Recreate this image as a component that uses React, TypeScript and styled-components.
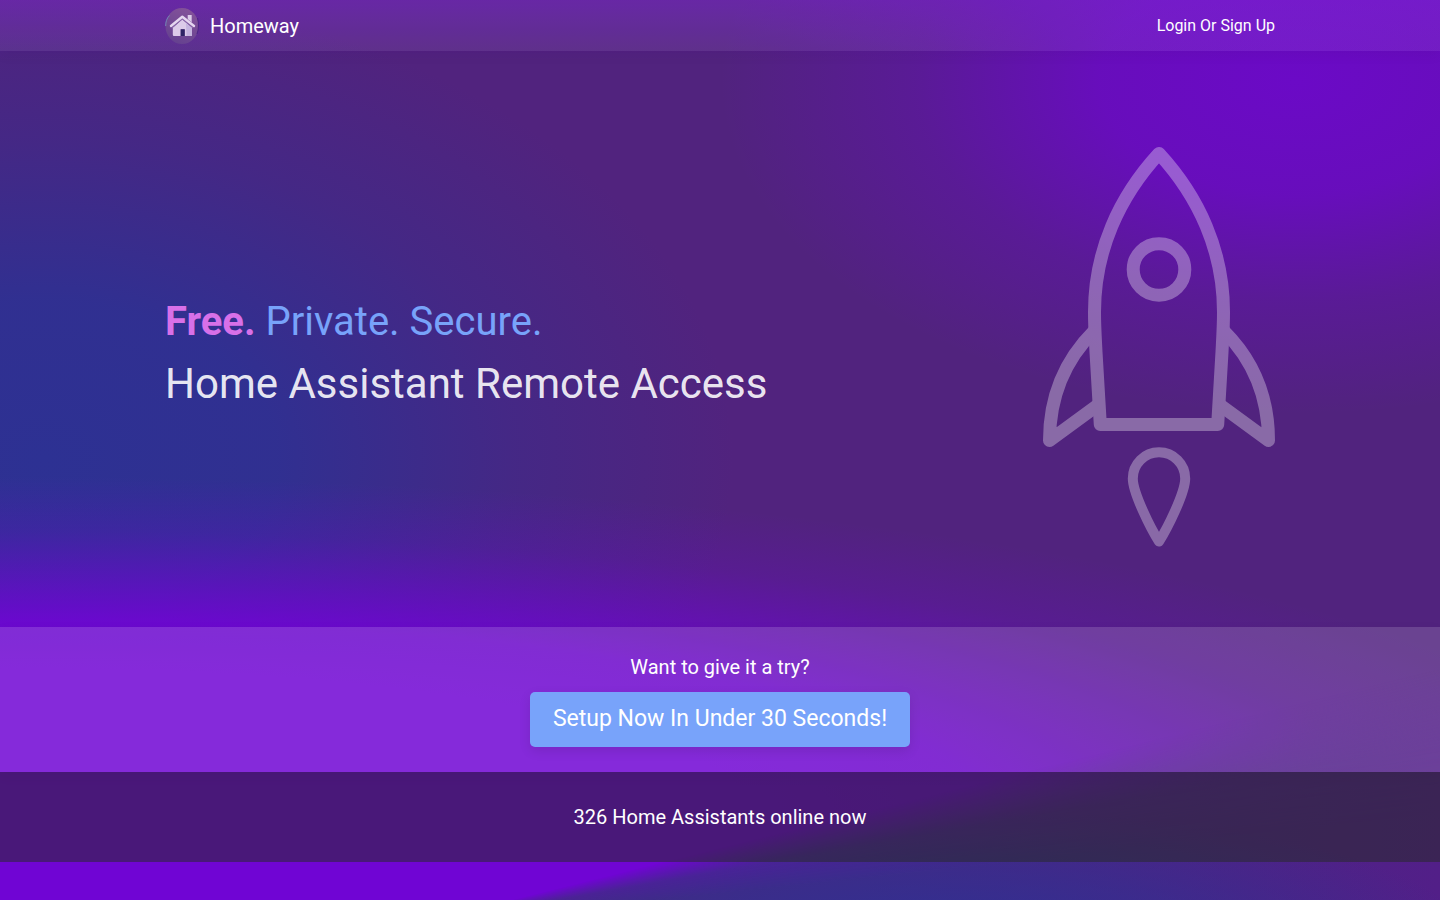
import React from "react";
import styled, { createGlobalStyle } from "styled-components";

const GlobalStyle = createGlobalStyle`
  *, *::before, *::after { box-sizing: border-box; }
  html { background: #51247d; }
  body {
    margin: 0;
    font-family: Roboto, "Liberation Sans", sans-serif;
    color: #fff;
  }
  h1, p { margin: 0; font-weight: 400; }
`;

const Page = styled.div`
  position: relative;
  isolation: isolate;
  min-height: 100vh;
  background:
    linear-gradient(to bottom, rgba(112, 5, 212, 0.38) 0, rgba(112, 5, 212, 0) 60px),
    radial-gradient(ellipse 40% 37% at 90% 9%, rgba(112, 5, 212, 0.84) 0%, rgba(112, 5, 212, 0.72) 34%, rgba(112, 5, 212, 0.28) 66%, rgba(112, 5, 212, 0) 100%),
    radial-gradient(ellipse 112% 38% at 3% 91%, #7005d4 0%, #7005d4 44%, rgba(112, 5, 212, 0.9) 58%, rgba(112, 5, 212, 0.22) 84%, rgba(112, 5, 212, 0) 100%),
    radial-gradient(ellipse 48% 52% at 3% 51%, #2d3193 0%, rgba(45, 49, 147, 0.9) 34%, rgba(45, 49, 147, 0.35) 68%, rgba(45, 49, 147, 0) 100%),
    #51237e;
`;

/* Blue sweep that rises to the right along the lower edge of the page. */
const Wave = styled.div`
  position: absolute;
  inset: 0;
  z-index: -1;
  background:
    radial-gradient(ellipse 36% 14% at 66% 104%, rgba(45, 49, 147, 0.9) 0%, rgba(45, 49, 147, 0.5) 50%, rgba(45, 49, 147, 0) 100%),
    linear-gradient(to right, #472882 60%, #521f88 100%);
  mask-image: conic-gradient(from 0deg at 28% 103%, transparent 76deg, rgba(0, 0, 0, 0.8) 80deg, #000 84deg, #000 120deg, transparent 120deg);
`;

const Container = styled.div`
  width: 100%;
  max-width: 1140px;
  margin: 0 auto;
  padding: 0 15px;
`;

const Header = styled.header`
  background: rgba(255, 255, 255, 0.07);
  box-shadow: 0 4px 12px rgba(0, 0, 0, 0.05);
`;

const Nav = styled(Container).attrs({ as: "nav" })`
  display: flex;
  align-items: center;
  justify-content: space-between;
  height: 51px;
`;

const Brand = styled.a`
  display: flex;
  align-items: center;
  gap: 11px;
  font-size: 20px;
  line-height: 24px;
  color: #fff;
  text-decoration: none;
`;

const LoginLink = styled.a`
  font-size: 16px;
  line-height: 24px;
  color: #fff;
  text-decoration: none;
`;

const Hero = styled(Container).attrs({ as: "section" })`
  display: flex;
  align-items: center;
  justify-content: space-between;
  gap: 32px;
  padding-top: 96px;
  padding-bottom: 80px;
`;

const Headline = styled.h1`
  display: flex;
  flex-direction: column;
  gap: 12px;
  padding-top: 12px;
  line-height: 50px;
`;

const Tagline = styled.span`
  font-size: 40px;
  color: #78a3fa;
`;

const Free = styled.strong`
  font-weight: 700;
  color: #d870e8;
`;

const Product = styled.span`
  font-size: 42px;
  color: rgba(255, 255, 255, 0.9);
`;

const RocketArt = styled.svg`
  display: block;
  flex: none;
  width: 232px;
  height: 400px;
`;

const TrySection = styled.section`
  display: flex;
  flex-direction: column;
  align-items: center;
  gap: 13px;
  padding: 28px 15px 25px;
  background: rgba(255, 255, 255, 0.15);
  box-shadow: 0 4px 12px rgba(0, 0, 0, 0.05);
`;

const Lead = styled.p`
  font-size: 20px;
  line-height: 24px;
`;

const SetupButton = styled.button`
  width: 380px;
  max-width: 100%;
  height: 55px;
  padding: 0 12px 1px;
  border: 0;
  border-radius: 5px;
  background: #78a3fa;
  box-shadow: 0 4px 12px rgba(0, 0, 0, 0.1);
  font-family: inherit;
  font-size: 23px;
  line-height: 28px;
  color: #fff;
  cursor: pointer;
`;

const Stats = styled.section`
  padding: 33px 15px;
  text-align: center;
  background: rgba(39, 43, 39, 0.52);
`;

const Logo = () => (
  <svg width="34" height="36" viewBox="0 0 34 36" aria-hidden="true">
    <defs>
      <linearGradient id="disc" x1="0.7" y1="0" x2="0.3" y2="1">
        <stop offset="0" stopColor="#84529a" />
        <stop offset="1" stopColor="#64418f" />
      </linearGradient>
    </defs>
    <ellipse cx="17" cy="18" rx="16.5" ry="18" fill="url(#disc)" />
    <path d="M4.5 7.5C1.6 10.500 .6 14 .7 18" fill="none" stroke="#7187b8" strokeWidth="1" />
    <path d="M32.500 10C34 15 33.800 21 32 26" fill="none" stroke="#4b2585" strokeWidth="1" />
    <path
      d="M17.300 11.400 27 19.800V26.800Q27 28 25.800 28H19.700V21.300H15.700V28H9Q7.800 28 7.800 26.800V19.800Z"
      fill="#dccbe9"
    />
    <path d="M21 15 27 19.800V28H21.500Z" fill="#c5b4df" />
    <path d="M15.700 21.300H19.700V28H15.700Z" fill="#2e2565" />
    <path d="M22.700 7H26.700V14.500L22.700 11Z" fill="#dccbe9" />
    <path
      d="M6.800 20 17.300 11 28 20"
      fill="none"
      stroke="#8a68ab"
      strokeWidth="1"
    />
    <path
      d="M6 18 17.300 8.700 29 18"
      fill="none"
      stroke="#e5d6ef"
      strokeWidth="2.400"
      strokeLinecap="round"
      strokeLinejoin="round"
    />
  </svg>
);

const Rocket = () => (
  <RocketArt viewBox="0 0 232 400" aria-hidden="true">
    <g
      opacity="0.32"
      fill="none"
      stroke="#fff"
      strokeWidth="13"
      strokeLinecap="round"
      strokeLinejoin="round"
    >
      <path d="M116 6.5C76 50 51.500 104 51.500 165C51.500 180 52.500 195 53 205L57.300 277.500H174.700L179 205C179.500 195 180.500 180 180.500 165C180.500 104 156 50 116 6.500Z" />
      <circle cx="116" cy="122.500" r="25.800" />
      <path d="M51 184C20 215 6.500 252 6.500 293.500L55 258" />
      <path d="M181 184C212 215 225.500 252 225.500 293.500L177 258" />
      <path
        strokeWidth="10"
        d="M116 394.500C108 382 89.800 346 89.800 331.500A26.200 26.200 0 0 1 142.200 331.500C142.200 346 124 382 116 394.500Z"
      />
    </g>
  </RocketArt>
);

export default function App() {
  return (
    <Page>
      <GlobalStyle />
      <Wave />
      <Header>
        <Nav>
          <Brand href="#home">
            <Logo />
            Homeway
          </Brand>
          <LoginLink href="#login">Login Or Sign Up</LoginLink>
        </Nav>
      </Header>
      <main>
        <Hero>
          <Headline>
            <Tagline>
              <Free>Free.</Free> Private. Secure.
            </Tagline>
            <Product>Home Assistant Remote Access</Product>
          </Headline>
          <Rocket />
        </Hero>
        <TrySection>
          <Lead>Want to give it a try?</Lead>
          <SetupButton type="button">Setup Now In Under 30 Seconds!</SetupButton>
        </TrySection>
        <Stats>
          <Lead>326 Home Assistants online now</Lead>
        </Stats>
      </main>
    </Page>
  );
}
